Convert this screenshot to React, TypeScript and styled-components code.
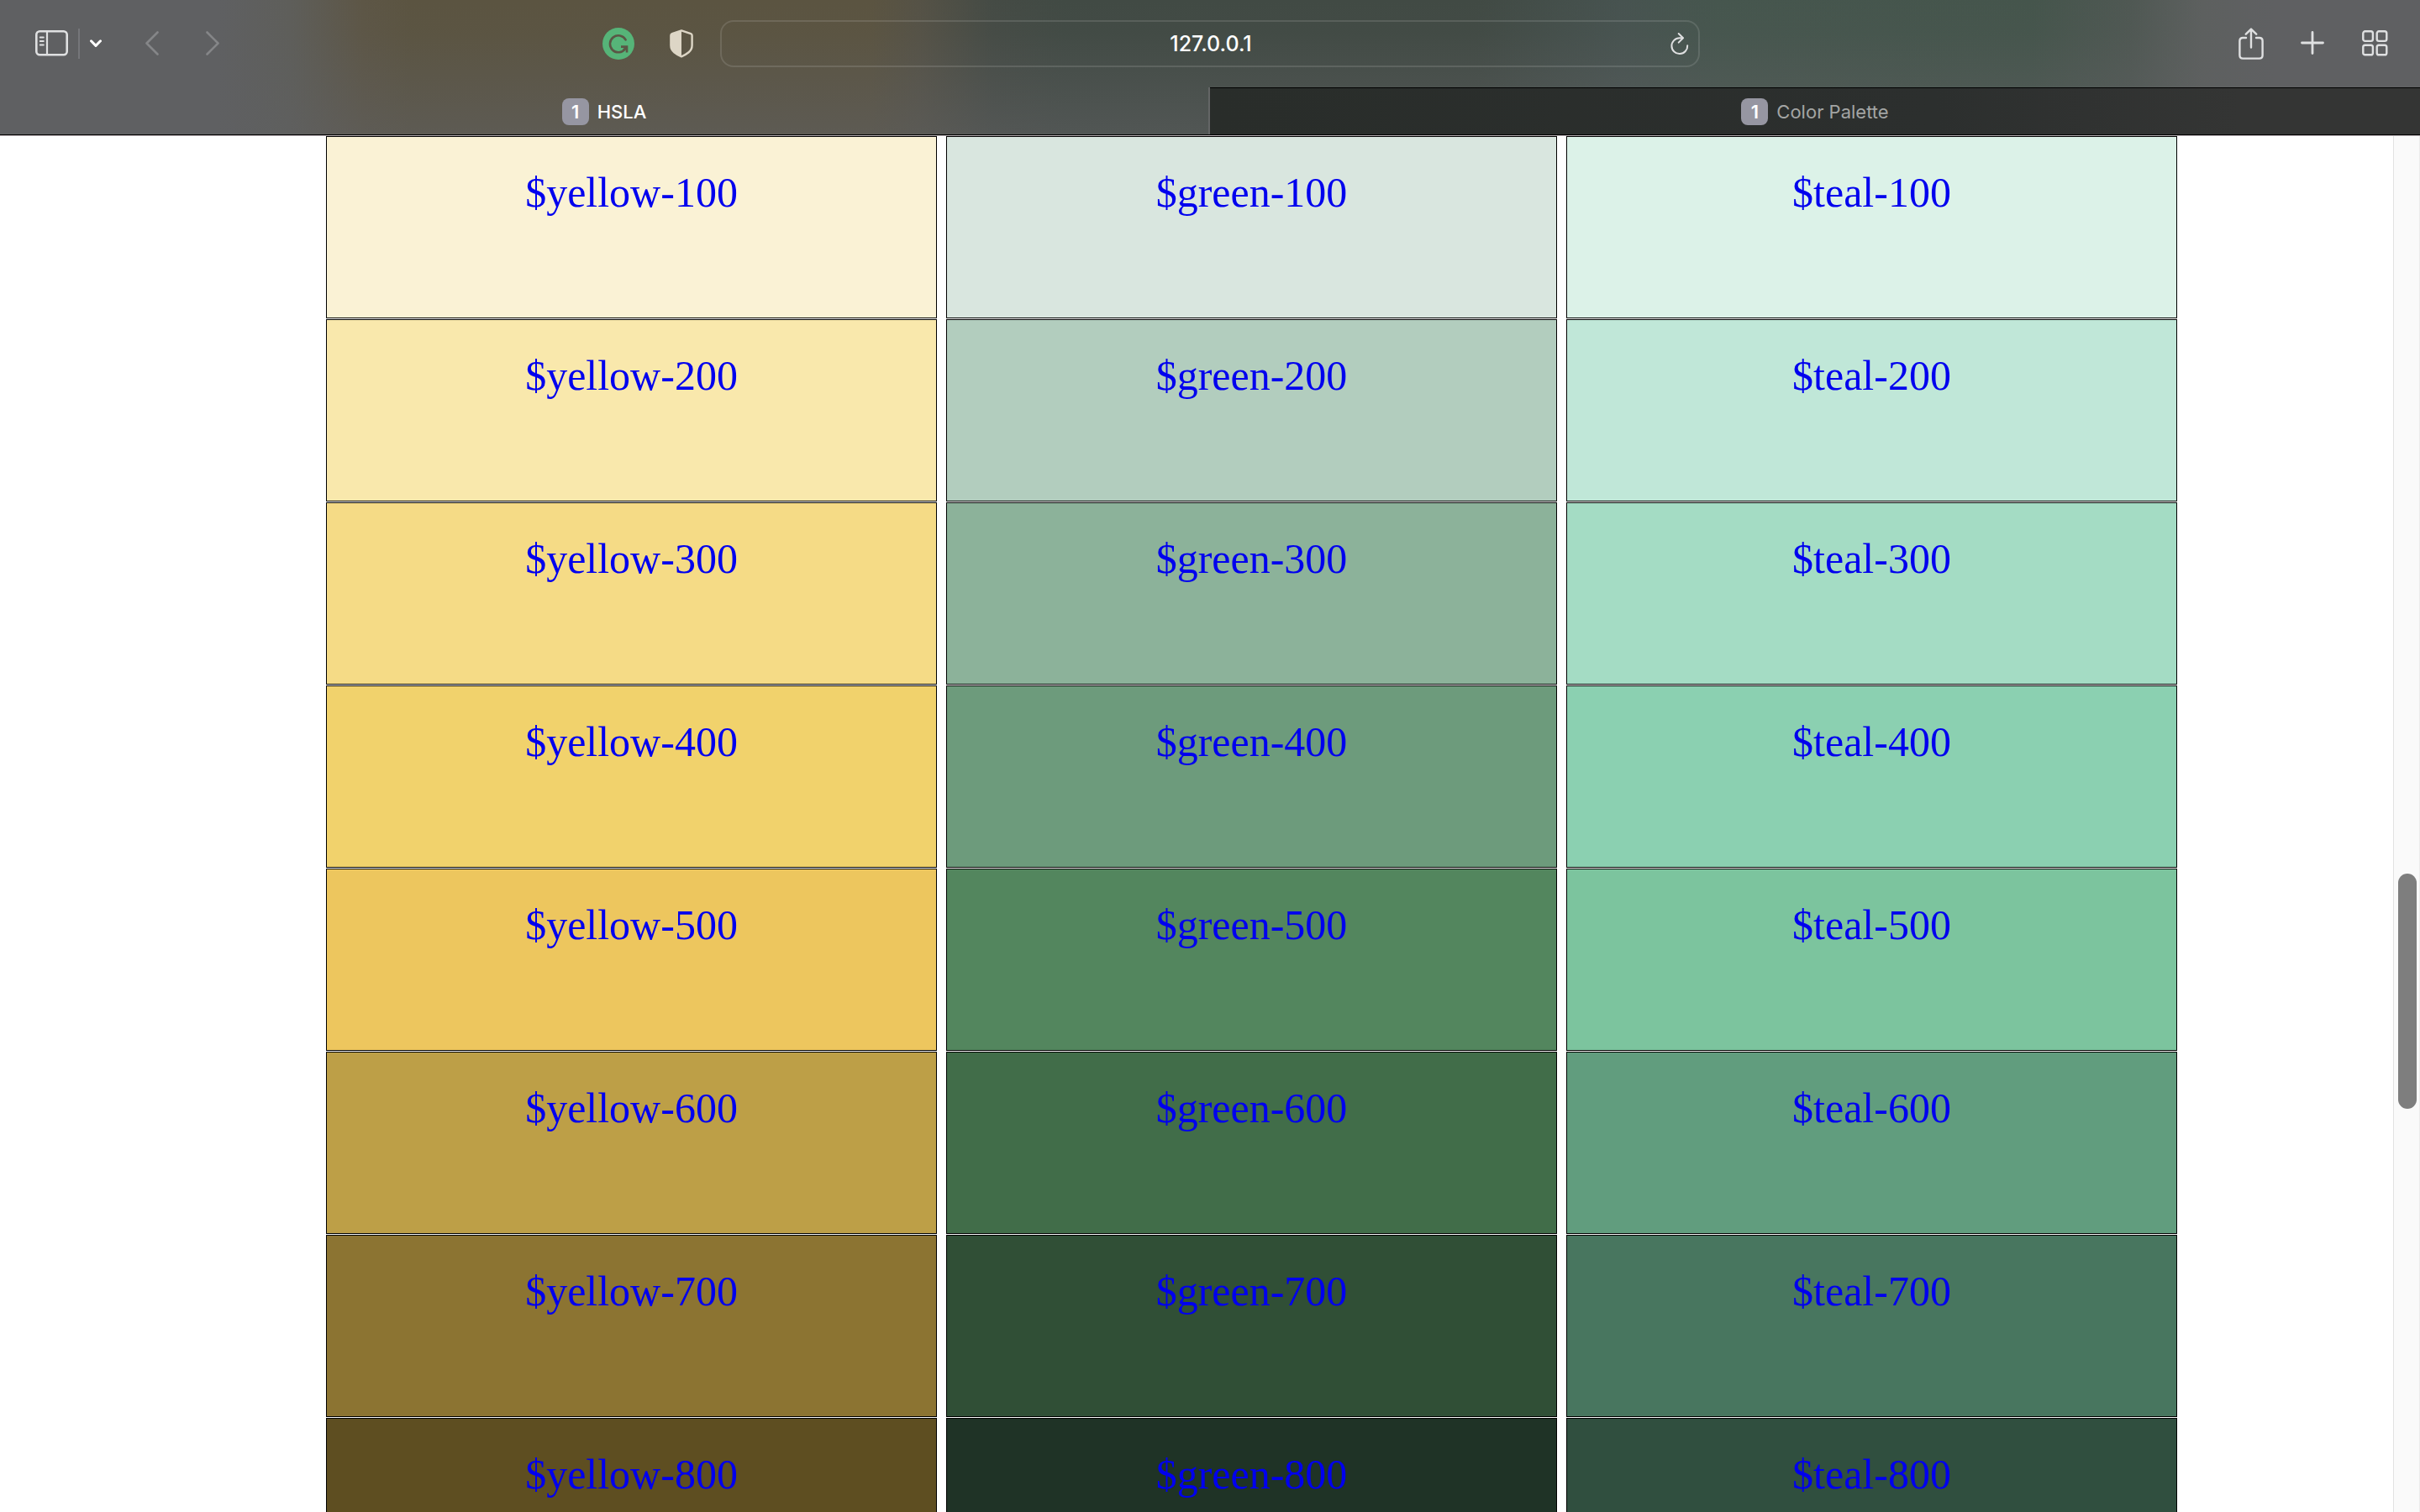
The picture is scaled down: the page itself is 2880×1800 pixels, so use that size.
import React from "react";
import styled, { createGlobalStyle } from "styled-components";

const GlobalStyle = createGlobalStyle`
  *, *::before, *::after { box-sizing: border-box; }
  body { margin: 0; background: #ffffff; overflow: hidden; }
`;

const uiFont = `Inter, Roboto, "Liberation Sans", sans-serif`;

const Window = styled.div`
  display: flex;
  flex-direction: column;
  height: 100vh;
`;

const Chrome = styled.header`
  flex: none;
  background:
    linear-gradient(180deg, rgba(95, 96, 98, 0) 0, rgba(95, 96, 98, 0.05) 40px, rgba(95, 96, 98, 0.55) 160px),
    linear-gradient(
      90deg,
      #5f6062 0%,
      #5f6062 9%,
      #5e5e5a 12%,
      #5d5646 15%,
      #5b5441 17%,
      #5b5441 36%,
      #555246 38%,
      #454b45 41%,
      #414a44 44%,
      #414a44 61%,
      #475350 67%,
      #46564e 71%,
      #45554c 84%,
      #4f5853 88%,
      #5d605f 91%,
      #5f6062 94%
    );
  border-bottom: 1px solid #000000;
  box-shadow: 0 1px 0 #b9b1b5;
  font-family: ${uiFont};
`;

const Toolbar = styled.div`
  display: grid;
  grid-template-columns: 1fr minmax(0, 1166px) 1fr;
  align-items: center;
  height: 104px;
`;

const ToolGroup = styled.div<{ $gap: number }>`
  display: flex;
  align-items: center;
  gap: ${(p) => p.$gap}px;
`;

const StartTools = styled.div`
  display: flex;
  align-items: center;
  justify-content: space-between;
  padding: 0 32px 0 40px;
`;

const EndTools = styled.div`
  display: flex;
  align-items: center;
  justify-content: flex-end;
  gap: 44px;
  padding-right: 38px;
`;

const IconButton = styled.button<{ $tone?: string }>`
  display: flex;
  align-items: center;
  justify-content: center;
  margin: 0;
  padding: 0;
  border: 0;
  background: none;
  color: ${(p) => p.$tone ?? "#dfe0e1"};
  cursor: pointer;

  svg { display: block; }
`;

const Divider = styled.span`
  width: 2px;
  height: 36px;
  background: #75767a;
`;

const AddressBar = styled.label`
  display: flex;
  align-items: center;
  height: 56px;
  padding: 0 10px 0 36px;
  border: 2px solid rgba(255, 255, 255, 0.12);
  border-radius: 16px;
`;

const AddressInput = styled.input`
  flex: 1;
  min-width: 0;
  padding: 0;
  border: 0;
  outline: 0;
  background: none;
  color: #ffffff;
  font: 500 25px/32px ${uiFont};
  text-align: center;
`;

const TabBar = styled.nav`
  display: grid;
  grid-template-columns: 1fr 1fr;
  height: 56px;
`;

const Tab = styled.button<{ $active?: boolean }>`
  display: flex;
  align-items: center;
  justify-content: center;
  gap: 10px;
  margin: 0;
  padding: ${(p) => (p.$active ? 2 : 1)}px 0 0;
  border: solid;
  border-width: ${(p) => (p.$active ? "0 2px 0 0" : "1px 0 0")};
  border-color: ${(p) => (p.$active ? "#646666" : "#000000")};
  background: ${(p) => (p.$active ? "none" : "linear-gradient(90deg, #292d2a, #2c2f2e 60%, #343534 85%)")};
  color: ${(p) => (p.$active ? "#ffffff" : "#a3a5a4")};
  font: ${(p) => (p.$active ? 500 : 400)} 22px/32px ${uiFont};
  cursor: pointer;
`;

const Badge = styled.span`
  width: 32px;
  height: 32px;
  border-radius: 8px;
  background: #9696a2;
  color: #ffffff;
  font-weight: 600;
  text-align: center;
`;

const Viewport = styled.div`
  flex: 1;
  min-height: 0;
  display: flex;
  padding-top: 1px;
  overflow: hidden;
`;

const Palette = styled.main`
  flex: 1;
  display: grid;
  grid-template-columns: repeat(3, 1fr);
  align-items: start;
  column-gap: 11px;
  padding: 0 257px 0 388px;
`;

const Shades = styled.section`
  display: flex;
  flex-direction: column;
  gap: 1px;
`;

const Swatch = styled.a<{ $color: string }>`
  display: block;
  height: 217px;
  padding-top: 37px;
  border: 1px solid #000000;
  background: ${(p) => p.$color};
  color: #0000ee;
  font: 50px/58px "Liberation Serif", "Times New Roman", serif;
  text-align: center;
  text-decoration: none;
`;

const ScrollTrack = styled.div`
  flex: none;
  width: 32px;
  display: grid;
  grid-template-rows: 878fr 280fr 480fr;
  padding: 0 3px 0 5px;
  border-left: 1px solid #e2e2e2;
  border-right: 1px solid #ececec;
  background: #fafafa;
`;

const ScrollThumb = styled.div`
  grid-row: 2;
  border-radius: 11px;
  background: #7e7e7e;
`;

const families = [
  {
    name: "yellow",
    shades: ["#faf2d5", "#f9e8ac", "#f5db86", "#f1d26c", "#edc65e", "#bd9f47", "#8c7432", "#5e4e21"],
  },
  {
    name: "green",
    shades: ["#d9e6df", "#b2cdbe", "#8cb29a", "#6d9b7c", "#53865e", "#416d49", "#304f36", "#1f3326"],
  },
  {
    name: "teal",
    shades: ["#dcf2e8", "#c0e7d8", "#a4dcc4", "#8bd0b1", "#7cc49e", "#619d7e", "#48765f", "#304f3f"],
  },
];

const line = {
  fill: "none",
  stroke: "currentColor",
  strokeLinecap: "round" as const,
  strokeLinejoin: "round" as const,
};

const SidebarIcon = () => (
  <svg width="41" height="36" viewBox="0 0 41 36" {...line} strokeWidth="2.6">
    <rect x="3.3" y="3.3" width="36.4" height="28" rx="4" />
    <path d="M16 3.5v27.5" strokeWidth="2.2" />
    <path d="M7.8 10.5h4M7.8 15h4M7.8 19.4h4" strokeWidth="2" />
  </svg>
);

const ChevronDown = () => (
  <svg width="14" height="10" viewBox="0 0 14 10" {...line} strokeWidth="3">
    <path d="M1.5 1.8 7 7.4l5.5-5.6" />
  </svg>
);

const ChevronSide = ({ forward }: { forward?: boolean }) => (
  <svg width="16" height="30" viewBox="0 0 16 30" {...line} strokeWidth="2.6">
    <path d={forward ? "M1.5 1.5 14.5 14.5 1.5 27.5" : "M14.5 1.5 1.5 14.5l13 13"} />
  </svg>
);

const GrammarIcon = () => (
  <svg width="38" height="38" viewBox="0 0 38 38" fill="none">
    <circle cx="19" cy="19" r="19" fill="#56b478" />
    <path d="M27.6 14.3A10 10 0 1 0 27 25.2" stroke="#5a5645" strokeWidth="2.6" strokeLinecap="round" />
    <path d="M22 22.6h7v7M28.6 23 24.6 27.2" stroke="#5a5645" strokeWidth="2.6" />
  </svg>
);

const ShieldIcon = () => (
  <svg width="28" height="34" viewBox="0 0 28 34">
    <path
      d="M14 1.4 25.2 5.2q1.4.5 1.4 2V19q0 5-4 8.200T14 32.400Q9.400 30.400 5.400 27.200T1.400 19V7.200q0-1.500 1.400-2Z"
      fill="none"
      stroke="currentColor"
      strokeWidth="2.400"
      strokeLinejoin="round"
    />
    <path d="M14 1.4 2.800 5.200q-1.400.500-1.400 2V19q0 5 4 8.200T14 32.400Z" fill="currentColor" />
  </svg>
);

const ReloadIcon = () => (
  <svg width="24" height="28" viewBox="0 0 24 28" {...line} strokeWidth="2">
    <path d="M15.500 7.300H11.800A9.400 9.400 0 1 0 21.200 16.200" />
    <path d="M10.700 2 16 7.300 10.700 12.600" />
  </svg>
);

const ShareIcon = () => (
  <svg width="30" height="38" viewBox="0 0 30 38" {...line} strokeWidth="2.400">
    <path d="M9 12H5.200Q1.400 12 1.400 15.800V32.800Q1.400 36.600 5.200 36.600H24.800Q28.600 36.600 28.600 32.800V15.800Q28.600 12 24.800 12H21" />
    <path d="M15 23.500V2M8.800 7.700 15 1.600l6.200 6.100" />
  </svg>
);

const PlusIcon = () => (
  <svg width="28" height="30" viewBox="0 0 28 30" {...line} strokeWidth="2.800">
    <path d="M14 1.500v25M1.500 14h25" />
  </svg>
);

const OverviewIcon = () => (
  <svg width="32" height="34" viewBox="0 0 32 34" {...line} strokeWidth="2.400">
    <rect x="2.300" y="2.300" width="11.600" height="11.600" rx="2.400" />
    <rect x="18.700" y="2.300" width="11.600" height="11.600" rx="2.400" />
    <rect x="2.300" y="18.700" width="11.600" height="11.600" rx="2.400" />
    <rect x="18.700" y="18.700" width="11.600" height="11.600" rx="2.400" />
  </svg>
);

export default function App() {
  return (
    <>
      <GlobalStyle />
      <Window>
        <Chrome>
          <Toolbar>
            <StartTools>
              <ToolGroup $gap={52}>
                <ToolGroup $gap={12}>
                  <IconButton aria-label="Show sidebar">
                    <SidebarIcon />
                  </IconButton>
                  <Divider />
                  <IconButton aria-label="Tab groups" $tone="#ffffff">
                    <ChevronDown />
                  </IconButton>
                </ToolGroup>
                <ToolGroup $gap={56}>
                  <IconButton aria-label="Back" $tone="#858688">
                    <ChevronSide />
                  </IconButton>
                  <IconButton aria-label="Forward" $tone="#858688">
                    <ChevronSide forward />
                  </IconButton>
                </ToolGroup>
              </ToolGroup>
              <ToolGroup $gap={42}>
                <IconButton aria-label="Writing assistant">
                  <GrammarIcon />
                </IconButton>
                <IconButton aria-label="Privacy report" $tone="#ddd6c6">
                  <ShieldIcon />
                </IconButton>
              </ToolGroup>
            </StartTools>
            <AddressBar>
              <AddressInput aria-label="Address" defaultValue="127.0.0.1" />
              <IconButton aria-label="Reload">
                <ReloadIcon />
              </IconButton>
            </AddressBar>
            <EndTools>
              <IconButton aria-label="Share">
                <ShareIcon />
              </IconButton>
              <IconButton aria-label="New tab">
                <PlusIcon />
              </IconButton>
              <IconButton aria-label="Tab overview">
                <OverviewIcon />
              </IconButton>
            </EndTools>
          </Toolbar>
          <TabBar>
            <Tab $active>
              <Badge>1</Badge>
              HSLA
            </Tab>
            <Tab>
              <Badge>1</Badge>
              Color Palette
            </Tab>
          </TabBar>
        </Chrome>
        <Viewport>
          <Palette>
            {families.map((family) => (
              <Shades key={family.name}>
                {family.shades.map((color, i) => (
                  <Swatch key={color} href={`#${family.name}-${i + 1}00`} $color={color}>
                    ${family.name}-{i + 1}00
                  </Swatch>
                ))}
              </Shades>
            ))}
          </Palette>
          <ScrollTrack>
            <ScrollThumb />
          </ScrollTrack>
        </Viewport>
      </Window>
    </>
  );
}
